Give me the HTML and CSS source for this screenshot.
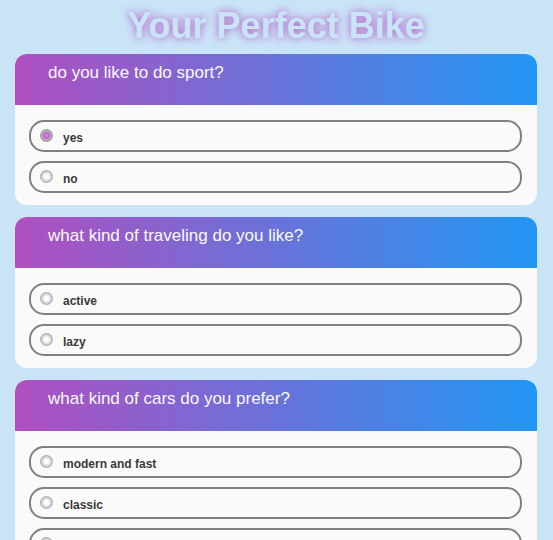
FILE: index.html
```html
<!DOCTYPE html>
<html lang="en">
<head>
<meta charset="utf-8">
<meta name="viewport" content="width=device-width, initial-scale=1">
<title>Your Perfect Bike</title>
<link rel="stylesheet" href="styles.css">
</head>
<body>
<h1 class="title">Your Perfect Bike</h1>
<form class="quiz">
  <section class="card">
    <h2 class="question">do you like to do sport?</h2>
    <div class="options">
      <label class="option"><input type="radio" name="sport" checked><span>yes</span></label>
      <label class="option"><input type="radio" name="sport"><span>no</span></label>
    </div>
  </section>
  <section class="card">
    <h2 class="question">what kind of traveling do you like?</h2>
    <div class="options">
      <label class="option"><input type="radio" name="travel"><span>active</span></label>
      <label class="option"><input type="radio" name="travel"><span>lazy</span></label>
    </div>
  </section>
  <section class="card">
    <h2 class="question">what kind of cars do you prefer?</h2>
    <div class="options">
      <label class="option"><input type="radio" name="cars"><span>modern and fast</span></label>
      <label class="option"><input type="radio" name="cars"><span>classic</span></label>
      <label class="option"><input type="radio" name="cars" aria-label="third option"></label>
    </div>
  </section>
</form>
</body>
</html>
```
FILE: styles.css
```css
* {
  box-sizing: border-box;
}

body {
  margin: 0;
  padding: 5px 16px 12px 15px;
  background: #c9e4f7;
  font-family: "Liberation Sans", Arial, sans-serif;
}

.title {
  margin: 0 0 7px;
  color: #c9e4f7;
  font-size: 36px;
  line-height: 42px;
  text-align: center;
  text-shadow: 0 0 8px #b04fc0;
}

.quiz {
  display: grid;
  gap: 12px;
}

.card {
  overflow: hidden;
  border-radius: 12px;
  background: #fafafa;
}

.question {
  margin: 0;
  padding: 9px 33px 22px;
  background: linear-gradient(to right, #b04fc0, #2196f3);
  color: #fafafa;
  font-size: 17px;
  font-weight: 400;
  line-height: 20px;
}

.options {
  display: grid;
  gap: 9px;
  padding: 15px 15px 12px 14px;
}

.option {
  display: flex;
  align-items: flex-start;
  gap: 10px;
  height: 32px;
  padding: 7px 9px;
  border: 2px solid #808080;
  border-radius: 15px;
  color: #3a3a3a;
  font-size: 12px;
  font-weight: 700;
  line-height: 18px;
}

.option input {
  appearance: none;
  flex: none;
  width: 13px;
  height: 13px;
  margin: 0;
  border: 1px solid #aaa;
  border-radius: 50%;
  background: radial-gradient(circle closest-side, #fff 35%, #c4c4c4 100%);
}

.option input:checked {
  border: 2px solid #a0a0a0;
  background: radial-gradient(circle closest-side, #d08cdc 10%, #b75fca 75%, #ddd 100%);
}
```
